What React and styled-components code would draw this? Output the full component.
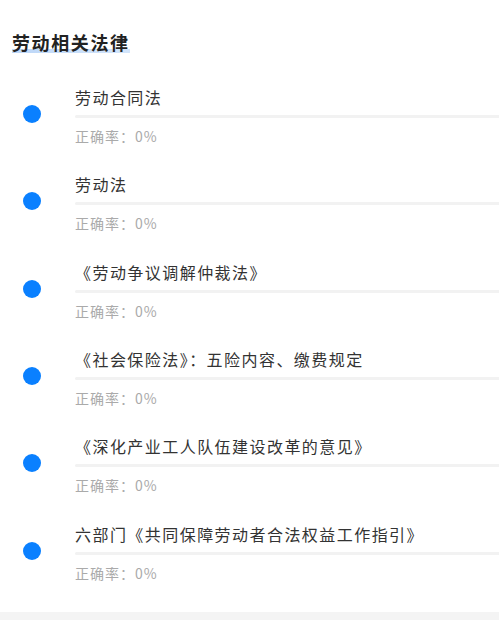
import styled, { createGlobalStyle } from "styled-components";

const GlobalStyle = createGlobalStyle`
  body {
    margin: 0;
    background: #ffffff;
    font-family: "Noto Sans CJK SC", "Noto Sans", sans-serif;
  }
`;

const StPage = styled.div`
  width: 499px;
  height: 620px;
  display: flex;
  flex-direction: column;
  overflow: hidden;
`;

const StSection = styled.section`
  flex: 1;
  padding: 30px 0 0 0;
  background: #ffffff;
`;

const StHeading = styled.h2`
  margin: 0 0 31px 12px;
  font-size: 18px;
  line-height: 24px;
  letter-spacing: 1.6px;
  font-weight: 700;
  color: #222;
`;

const StMark = styled.span`
  display: inline-block;
  background-image: linear-gradient(90deg, #bcd6f7, #d3e5fb);
  background-repeat: no-repeat;
  background-size: 100% 4px;
  background-position: 0 19px;
`;

const StList = styled.ul`
  list-style: none;
  margin: 0;
  padding: 0;
`;

const StItem = styled.li`
  display: flex;
  align-items: flex-start;
  height: 87.33px;
`;

const StDotCol = styled.div`
  width: 65px;
  height: 58px;
  display: flex;
  align-items: center;
  padding-left: 23px;
  box-sizing: border-box;
`;

const StDot = styled.span`
  width: 18px;
  height: 18px;
  border-radius: 50%;
  background: #0a80ff;
`;

const StBody = styled.div`
  flex: 1;
  display: flex;
  flex-direction: column;
  margin-left: 10px;
`;

const StName = styled.div`
  font-size: 16px;
  line-height: 24px;
  letter-spacing: 1.45px;
  color: #333;
  white-space: nowrap;
`;

const StBar = styled.div`
  height: 3px;
  margin-top: 6px;
  background: #f2f2f2;
  border-radius: 2px 0 0 2px;
`;

const StRate = styled.div`
  margin-top: 8px;
  font-size: 14px;
  line-height: 20px;
  letter-spacing: 1px;
  color: #aaa;
`;

const StFooter = styled.div`
  height: 8px;
  background: #f4f4f4;
`;

const laws = [
  "劳动合同法",
  "劳动法",
  "《劳动争议调解仲裁法》",
  "《社会保险法》：五险内容、缴费规定",
  "《深化产业工人队伍建设改革的意见》",
  "六部门《共同保障劳动者合法权益工作指引》",
];

const App = () => {
  return (
    <StPage>
      <GlobalStyle />
      <StSection>
        <StHeading>
          <StMark>劳动相关法律</StMark>
        </StHeading>
        <StList>
          {laws.map((name) => (
            <StItem key={name}>
              <StDotCol>
                <StDot />
              </StDotCol>
              <StBody>
                <StName>{name}</StName>
                <StBar />
                <StRate>正确率：0%</StRate>
              </StBody>
            </StItem>
          ))}
        </StList>
      </StSection>
      <StFooter />
    </StPage>
  );
};

export default App;
